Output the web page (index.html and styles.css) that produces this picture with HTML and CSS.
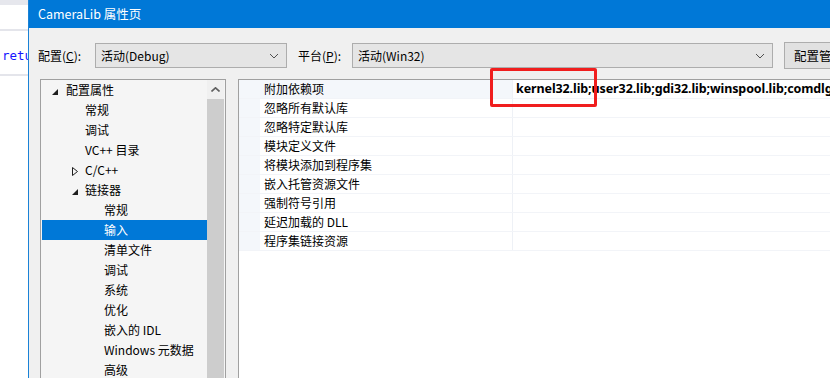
FILE: index.html
```html
<!DOCTYPE html>
<html lang="zh-CN">
<head>
  <meta charset="UTF-8" />
  <title>CameraLib 属性页</title>
  <link rel="stylesheet" href="styles.css">
</head>
<body>
  <div class="editor">
    <div class="editor-tabs"></div>
    <div class="editor-bar"></div>
    <div class="editor-code">retu</div>
    <div class="editor-bar lower"></div>
  </div>

  <div class="dialog">
    <div class="titlebar">CameraLib 属性页</div>
    <div class="content">
      <div class="config-row">
        <span class="label">配置(<u>C</u>):</span>
        <div class="combo combo-config">活动(Debug)<span class="chev"><svg width="10" height="6" viewBox="0 0 10 6"><path d="M1 1 L5 5 L9 1" fill="none" stroke="#505050" stroke-width="1"/></svg></span></div>
        <span class="label platform">平台(<u>P</u>):</span>
        <div class="combo combo-platform">活动(Win32)<span class="chev"><svg width="10" height="6" viewBox="0 0 10 6"><path d="M1 1 L5 5 L9 1" fill="none" stroke="#505050" stroke-width="1"/></svg></span></div>
        <button class="manager">配置管理器(O)...</button>
      </div>

      <div class="panes">
        <div class="tree">
          <ul class="tree-list">
            <li class="lvl1"><span class="tw"><svg width="6" height="6" viewBox="0 0 6 6"><polygon points="6,0 6,6 0,6" fill="#1e1e1e"/></svg></span>配置属性</li>
            <li class="lvl2">常规</li>
            <li class="lvl2">调试</li>
            <li class="lvl2">VC++ 目录</li>
            <li class="lvl2 node"><span class="tw"><svg width="6" height="9" viewBox="0 0 6 9"><polygon points="0.5,0.5 5.5,4.5 0.5,8.5" fill="none" stroke="#1e1e1e"/></svg></span>C/C++</li>
            <li class="lvl2 node"><span class="tw"><svg width="6" height="6" viewBox="0 0 6 6"><polygon points="6,0 6,6 0,6" fill="#1e1e1e"/></svg></span>链接器</li>
            <li class="lvl3">常规</li>
            <li class="lvl3 selected">输入</li>
            <li class="lvl3">清单文件</li>
            <li class="lvl3">调试</li>
            <li class="lvl3">系统</li>
            <li class="lvl3">优化</li>
            <li class="lvl3">嵌入的 IDL</li>
            <li class="lvl3">Windows 元数据</li>
            <li class="lvl3">高级</li>
          </ul>
          <div class="scrollbar">
            <div class="scroll-up"><svg width="9" height="5" viewBox="0 0 9 5"><path d="M0.5 4.5 L4.5 0.8 L8.5 4.5" fill="none" stroke="#606060" stroke-width="1.6"/></svg></div>
            <div class="scroll-thumb"></div>
          </div>
        </div>

        <div class="grid">
          <div class="grid-row current">
            <div class="gutter"></div>
            <div class="name">附加依赖项</div>
            <div class="value">kernel32.lib;user32.lib;gdi32.lib;winspool.lib;comdlg32.lib;advapi32.lib;shell32.lib</div>
          </div>
          <div class="grid-row"><div class="gutter"></div><div class="name">忽略所有默认库</div><div class="value"></div></div>
          <div class="grid-row"><div class="gutter"></div><div class="name">忽略特定默认库</div><div class="value"></div></div>
          <div class="grid-row"><div class="gutter"></div><div class="name">模块定义文件</div><div class="value"></div></div>
          <div class="grid-row"><div class="gutter"></div><div class="name">将模块添加到程序集</div><div class="value"></div></div>
          <div class="grid-row"><div class="gutter"></div><div class="name">嵌入托管资源文件</div><div class="value"></div></div>
          <div class="grid-row"><div class="gutter"></div><div class="name">强制符号引用</div><div class="value"></div></div>
          <div class="grid-row"><div class="gutter"></div><div class="name">延迟加载的 DLL</div><div class="value"></div></div>
          <div class="grid-row"><div class="gutter"></div><div class="name">程序集链接资源</div><div class="value"></div></div>
          <div class="highlight"></div>
        </div>
      </div>
    </div>
  </div>
</body>
</html>
```

FILE: styles.css
```css
* {
  box-sizing: border-box;
  margin: 0;
  padding: 0;
}

html, body {
  width: 830px;
  height: 378px;
  overflow: hidden;
  background: #ffffff;
  font-family: "Noto Sans CJK SC", "Noto Sans", sans-serif;
  font-size: 12px;
  color: #000;
}

body {
  display: flex;
}

/* editor behind the dialog */
.editor {
  width: 28px;
  flex: none;
  background: #fff;
  overflow: hidden;
}

.editor-tabs {
  height: 5px;
  background: #e6e7ed;
}

.editor-bar {
  height: 2px;
  margin-top: 24px;
  background: #e4e5eb;
}

.editor-bar.lower {
  margin-top: 11px;
}

.editor-code {
  margin-top: 17px;
  padding-left: 2px;
  height: 15px;
  font-family: "DejaVu Sans Mono", "Liberation Mono", monospace;
  font-size: 12.5px;
  line-height: 15px;
  color: #1515ff;
  white-space: nowrap;
}

/* dialog */
.dialog {
  flex: 1;
  display: flex;
  flex-direction: column;
  border-left: 1px solid #1a82d6;
  min-width: 0;
}

.titlebar {
  height: 28px;
  flex: none;
  background: #0078d7;
  color: #fff;
  padding-left: 9px;
  line-height: 28px;
  font-size: 12.5px;
  white-space: nowrap;
}

.content {
  flex: 1;
  background: #f0f0f0;
  padding: 14px 0 0 9px;
  display: flex;
  flex-direction: column;
  min-width: 0;
}

.config-row {
  display: flex;
  align-items: center;
  height: 26px;
  white-space: nowrap;
}

.label {
  width: 57px;
  flex: none;
}

.label.platform {
  margin-left: 11px;
  width: 54px;
}

.combo {
  position: relative;
  height: 25px;
  line-height: 23px;
  padding-left: 5px;
  background: #e5e5e5;
  border: 1px solid #adadad;
  flex: none;
}

.combo-config {
  width: 192px;
}

.combo-platform {
  width: 421px;
}

.chev {
  position: absolute;
  right: 7px;
  top: 9px;
  line-height: 0;
}

.manager {
  margin-left: 11px;
  height: 27px;
  padding: 0 12px 0 9px;
  background: #e1e1e1;
  border: 1px solid #adadad;
  font-family: inherit;
  font-size: 12.5px;
  flex: none;
}

/* panes */
.panes {
  flex: 1;
  display: flex;
  margin-top: 11px;
  gap: 12px;
  min-height: 0;
}

.tree {
  width: 186px;
  margin-left: 2px;
  flex: none;
  display: flex;
  border: 1px solid #a0a0a0;
  border-bottom: none;
  background: #f5f5f5;
  padding-left: 1px;
}

.tree-list {
  list-style: none;
  width: 165px;
  flex: none;
}

.tree-list li {
  height: 20px;
  line-height: 19px;
  white-space: nowrap;
  position: relative;
}

.tw {
  position: absolute;
  top: 0;
  line-height: 19px;
}

.tw svg {
  vertical-align: middle;
}

.lvl1 {
  padding-left: 24px;
}

.lvl1 .tw {
  left: 10px;
}

.lvl2 {
  padding-left: 43px;
}

.lvl2.node .tw {
  left: 30px;
}

.lvl3 {
  padding-left: 62px;
}

.tree-list li.selected {
  background: #0078d7;
  color: #fff;
}

.scrollbar {
  width: 17px;
  flex: none;
  display: flex;
  flex-direction: column;
  background: #f0f0f0;
}

.scroll-up {
  height: 19px;
  display: flex;
  align-items: center;
  justify-content: center;
}

.scroll-thumb {
  flex: 1;
  background: #cdcdcd;
}

/* property grid */
.grid {
  position: relative;
  flex: 1;
  border-left: 1px solid #a0a0a0;
  border-top: 1px solid #a0a0a0;
  background: #fff;
  min-width: 0;
}

.grid-row {
  display: flex;
  height: 19px;
  border-bottom: 1px solid #f2f4f8;
}

.gutter {
  width: 21px;
  flex: none;
  background: #f4f7fb;
}

.name {
  width: 253px;
  flex: none;
  padding-left: 4px;
  line-height: 18px;
  border-right: 1px solid #eef1f6;
  white-space: nowrap;
}

.grid-row.current .name {
  background: #f4f7fb;
}

.value {
  flex: 1;
  padding-left: 3px;
  line-height: 18px;
  white-space: nowrap;
  overflow: hidden;
  font-family: "Noto Sans", "Liberation Sans", sans-serif;
  font-weight: bold;
  font-size: 12.5px;
  letter-spacing: -0.1px;
}

/* red annotation box drawn over the grid */
.highlight {
  position: absolute;
  left: 251px;
  top: -12px;
  width: 107px;
  height: 39px;
  border: 3px solid #f01e1e;
  border-radius: 2px;
}
```
